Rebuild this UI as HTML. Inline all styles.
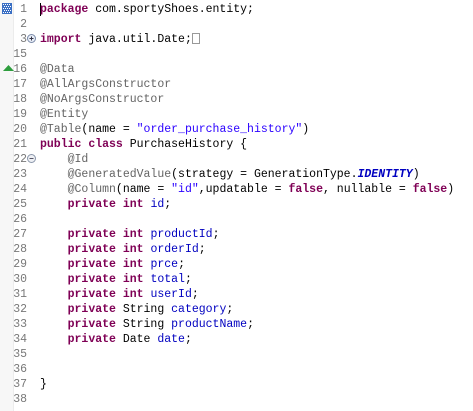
<!DOCTYPE html>
<html><head><style>
html,body{margin:0;padding:0;background:#fff;width:473px;height:411px;overflow:hidden}
.strip{position:absolute;left:0;top:0;width:13px;height:411px;background:#f7f7f7;border-right:1px solid #ececec}
.nums{position:absolute;left:0;top:2px;width:27px;text-align:right;font:11.5px/15px "Liberation Mono",monospace;color:#787878}
.code{position:absolute;left:40px;top:2px;font:11.5px/15px "Liberation Mono",monospace;color:#000;white-space:pre}
.k{color:#7f0055;font-weight:bold}.a{color:#646464}.s{color:#2a00ff}.f{color:#0000c0}.i{color:#0000c0;font-weight:bold;font-style:italic}
.cur{position:absolute;left:40px;top:3px;width:1px;height:13px;background:#000}
</style></head><body>
<div class="strip"></div>
<svg style="position:absolute;left:2px;top:3px" width="10" height="11"><rect width="10" height="11" fill="#3a6fc4"/><g fill="#fff"><rect x="1" y="1" width="1" height="1"/><rect x="3" y="1" width="1" height="1"/><rect x="5" y="1" width="1" height="1"/><rect x="7" y="1" width="1" height="1"/><rect x="2" y="3" width="1" height="1"/><rect x="4" y="3" width="1" height="1"/><rect x="6" y="3" width="1" height="1"/><rect x="8" y="3" width="1" height="1"/><rect x="1" y="5" width="1" height="1"/><rect x="3" y="5" width="1" height="1"/><rect x="5" y="5" width="1" height="1"/><rect x="7" y="5" width="1" height="1"/><rect x="2" y="7" width="1" height="1"/><rect x="4" y="7" width="1" height="1"/><rect x="6" y="7" width="1" height="1"/><rect x="8" y="7" width="1" height="1"/><rect x="1" y="9" width="1" height="1"/><rect x="3" y="9" width="1" height="1"/><rect x="5" y="9" width="1" height="1"/><rect x="7" y="9" width="1" height="1"/></g></svg>
<svg style="position:absolute;left:27px;top:34px" width="9" height="9"><circle cx="4.5" cy="4.5" r="4" fill="#e8eef8" stroke="#7a8aa8"/><path d="M2.5 4.5h4M4.5 2.5v4" stroke="#334" stroke-width="1"/></svg>
<svg style="position:absolute;left:27px;top:154px" width="9" height="9"><circle cx="4.5" cy="4.5" r="4" fill="#eef0f4" stroke="#8a96aa"/><path d="M2.5 4.5h4" stroke="#556" stroke-width="1"/></svg>
<svg style="position:absolute;left:3px;top:65px" width="11" height="6"><path d="M0 6L5.5 0L11 6Z" fill="#2e9e3e"/></svg>
<div class="nums">1<br>2<br>3<br>15<br>16<br>17<br>18<br>19<br>20<br>21<br>22<br>23<br>24<br>25<br>26<br>27<br>28<br>29<br>30<br>31<br>32<br>33<br>34<br>35<br>36<br>37<br>38</div>
<div class="cur"></div>
<div class="code"><span class="k">package</span> com.sportyShoes.entity;

<span class="k">import</span> java.util.Date;<span style="display:inline-block;width:8px;height:11px;border:1px solid #999;vertical-align:-2px;box-sizing:border-box"></span>

<span class="a">@Data</span>
<span class="a">@AllArgsConstructor</span>
<span class="a">@NoArgsConstructor</span>
<span class="a">@Entity</span>
<span class="a">@Table</span>(name = <span class="s">"order_purchase_history"</span>)
<span class="k">public</span> <span class="k">class</span> PurchaseHistory {
    <span class="a">@Id</span>
    <span class="a">@GeneratedValue</span>(strategy = GenerationType.<span class="i">IDENTITY</span>)
    <span class="a">@Column</span>(name = <span class="s">"id"</span>,updatable = <span class="k">false</span>, nullable = <span class="k">false</span>)
    <span class="k">private</span> <span class="k">int</span> <span class="f">id</span>;

    <span class="k">private</span> <span class="k">int</span> <span class="f">productId</span>;
    <span class="k">private</span> <span class="k">int</span> <span class="f">orderId</span>;
    <span class="k">private</span> <span class="k">int</span> <span class="f">prce</span>;
    <span class="k">private</span> <span class="k">int</span> <span class="f">total</span>;
    <span class="k">private</span> <span class="k">int</span> <span class="f">userId</span>;
    <span class="k">private</span> String <span class="f">category</span>;
    <span class="k">private</span> String <span class="f">productName</span>;
    <span class="k">private</span> Date <span class="f">date</span>;


}
</div>
</body></html>
